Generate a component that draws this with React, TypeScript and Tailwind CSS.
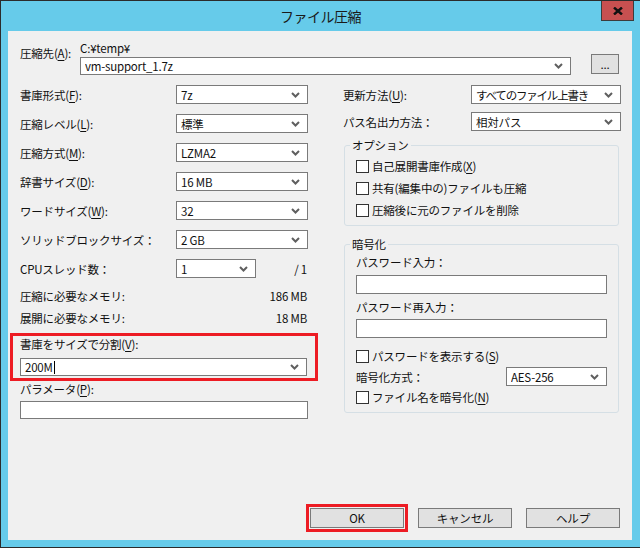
import React from 'react';

const Chevron = () => (
  <svg width="9" height="6" viewBox="0 0 9 6" className="shrink-0">
    <path d="M1 1 L4.5 4.5 L8 1" fill="none" stroke="#5f5f5f" strokeWidth="2" />
  </svg>
);

const Key = ({ k }: { k: string }) => (
  <>
    (<span className="underline underline-offset-[2px]">{k}</span>)
  </>
);

const Select: React.FC<{ value?: React.ReactNode; className?: string }> = ({ value, className = '' }) => (
  <div className={`flex items-center bg-white border border-[#7a7a7a] pl-[4px] pr-[7px] ${className}`}>
    <span className="flex-1 flex items-center whitespace-nowrap overflow-hidden">{value}</span>
    <Chevron />
  </div>
);

const Check: React.FC<{ label: React.ReactNode; className?: string }> = ({ label, className = '' }) => (
  <div className={`flex items-start h-[21px] ${className}`}>
    <span className="mt-[4px] w-[13px] h-[13px] border border-[#333333] bg-white shrink-0" />
    <span className="ml-[3px] mt-[3px] whitespace-nowrap">{label}</span>
  </div>
);

const Btn: React.FC<{ children: React.ReactNode }> = ({ children }) => (
  <button className="w-[94px] h-[20px] flex items-center justify-center bg-[#e1e1e1] border border-[#7a7a7a]">
    {children}
  </button>
);

const Row: React.FC<{ label: React.ReactNode; value: string }> = ({ label, value }) => (
  <div className="flex items-center justify-between h-[19px]">
    <span className="whitespace-nowrap">{label}</span>
    <Select value={value} className="w-[132px] h-[19px]" />
  </div>
);

export default function App() {
  return (
    <div className="w-[640px] h-[548px] flex flex-col bg-[#66cbea] border-l border-t border-b border-[#2b2b2b] font-['Noto_Sans_CJK_JP','Noto_Sans_CJK_SC',sans-serif] text-[11.5px] leading-[14px] text-[#111] tracking-[-0.2px] overflow-hidden">
      {/* title bar */}
      <div className="h-[30px] grid grid-cols-[1fr_auto_1fr] shrink-0">
        <div />
        <div className="self-center text-[14px] leading-[16px] text-[#1a1a1a] tracking-[-0.5px]">ファイル圧縮</div>
        <div className="flex justify-end items-start pr-[6px]">
          <div className="-mt-[1px] w-[33px] h-[21px] bg-[#c75050] border border-[#3c3c3c] flex items-center justify-center">
            <svg width="10" height="8" viewBox="0 0 10 8">
              <path d="M1 0.5 L9 7.5 M9 0.5 L1 7.5" stroke="#111" strokeWidth="2.4" />
            </svg>
          </div>
        </div>
      </div>

      <div className="flex flex-1 pl-[7px] pr-[8px] pb-[7px]">
        <div className="flex-1 flex flex-col bg-[#f0f0f0] pt-[10px] pl-[12px] pr-[11px] pb-[12px]">
          {/* destination */}
          <div className="flex">
            <div className="w-[60px] pt-[5px] whitespace-nowrap">
              圧縮先<Key k="A" />:
            </div>
            <div className="flex flex-col">
              <div>C:¥temp¥</div>
              <div className="flex items-start mt-[2px]">
                <Select value="vm-support_1.7z" className="w-[491px] h-[18px]" />
                <button className="ml-[20px] -mt-[3px] w-[28px] h-[20px] flex items-center justify-center bg-[#e1e1e1] border border-[#7a7a7a] leading-[10px]">
                  ...
                </button>
              </div>
            </div>
          </div>

          <div className="flex mt-[10px]">
            {/* left column */}
            <div className="w-[288px] flex flex-col">
              <div className="flex flex-col gap-[10px]">
                <Row label={<>書庫形式<Key k="F" />:</>} value="7z" />
                <Row label={<>圧縮レベル<Key k="L" />:</>} value="標準" />
                <Row label={<>圧縮方式<Key k="M" />:</>} value="LZMA2" />
                <Row label={<>辞書サイズ<Key k="D" />:</>} value="16 MB" />
                <Row label={<>ワードサイズ<Key k="W" />:</>} value="32" />
                <Row label="ソリッドブロックサイズ：" value="2 GB" />
                <div className="flex items-center h-[19px]">
                  <span className="w-[156px] whitespace-nowrap">CPUスレッド数：</span>
                  <Select value="1" className="w-[80px] h-[19px]" />
                  <span className="ml-auto pr-[1px]">/ 1</span>
                </div>
              </div>

              <div className="flex justify-between mt-[11px] pr-[1px]">
                <span>圧縮に必要なメモリ:</span>
                <span>186 MB</span>
              </div>
              <div className="flex justify-between mt-[8px] pr-[1px]">
                <span>展開に必要なメモリ:</span>
                <span>18 MB</span>
              </div>

              <div className="mt-[8px] -ml-[10px] -mr-[10px] border-[3px] border-[#ed1c24] pl-[7px] pr-[8px] pt-[1px] pb-[2px]">
                <div>
                  書庫をサイズで分割<Key k="V" />:
                </div>
                <Select
                  value={
                    <>
                      200M<span className="ml-[1px] w-[1px] h-[13px] bg-black inline-block" />
                    </>
                  }
                  className="mt-[7px] h-[18px]"
                />
              </div>

              <div className="mt-[1px]">
                パラメータ<Key k="P" />:
              </div>
              <div className="mt-[5px] h-[18px] bg-white border border-[#7a7a7a]" />
            </div>

            {/* right column */}
            <div className="ml-[35px] w-[278px] flex flex-col">
              <div className="flex items-center justify-between h-[19px]">
                <span>
                  更新方法<Key k="U" />:
                </span>
                <Select
                  value={<span className="tracking-[-1.2px]">すべてのファイル上書き</span>}
                  className="w-[150px] h-[19px]"
                />
              </div>
              <div className="flex items-center justify-between h-[19px] mt-[8px]">
                <span>パス名出力方法：</span>
                <Select value="相対パス" className="w-[150px] h-[19px]" />
              </div>

              <fieldset className="mt-[7px] ml-[1px] mr-[2px] border border-[#d5dfe5] rounded-[3px] px-[5px] pb-[4px]">
                <legend className="px-[2px]">オプション</legend>
                <div className="px-[6px] pt-[4px] flex flex-col gap-[1px]">
                  <Check label={<>自己展開書庫作成<Key k="X" /></>} />
                  <Check label="共有(編集中の)ファイルも圧縮" />
                  <Check label="圧縮後に元のファイルを削除" />
                </div>
              </fieldset>

              <fieldset className="mt-[11px] ml-[1px] mr-[2px] border border-[#d5dfe5] rounded-[3px] px-[5px] pb-[4px]">
                <legend className="px-[2px]">暗号化</legend>
                <div className="px-[6px] pt-[4px] flex flex-col">
                  <div>パスワード入力：</div>
                  <div className="mt-[6px] h-[19px] bg-white border border-[#7a7a7a]" />
                  <div className="mt-[6px]">パスワード再入力：</div>
                  <div className="mt-[5px] h-[19px] bg-white border border-[#7a7a7a]" />
                  <Check className="mt-[8px]" label={<>パスワードを表示する<Key k="S" /></>} />
                  <div className="flex items-center justify-between h-[19px]">
                    <span>暗号化方式：</span>
                    <Select value="AES-256" className="w-[101px] h-[19px]" />
                  </div>
                  <Check className="mt-[1px]" label={<>ファイル名を暗号化<Key k="N" /></>} />
                </div>
              </fieldset>
            </div>
          </div>

          {/* buttons */}
          <div className="mt-auto flex justify-end gap-[14px] pr-[1px]">
            <div className="-m-[4px] border-[3px] border-[#ed1c24] p-[1px]">
              <Btn>OK</Btn>
            </div>
            <Btn>キャンセル</Btn>
            <Btn>ヘルプ</Btn>
          </div>
        </div>
      </div>
    </div>
  );
}
